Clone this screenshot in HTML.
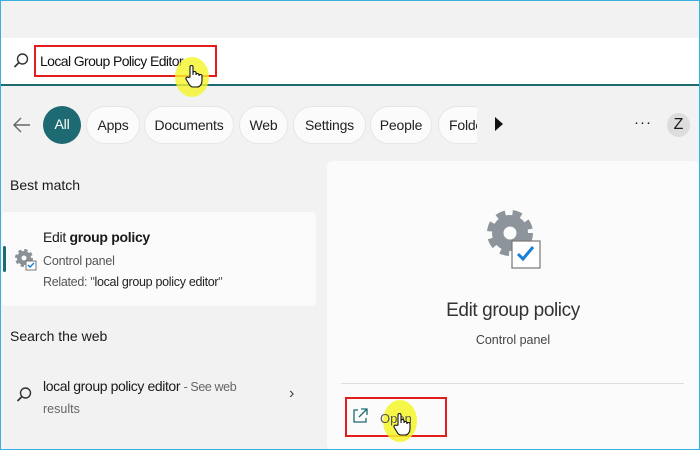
<!DOCTYPE html>
<html><head><style>
*{margin:0;padding:0;box-sizing:border-box}
body{width:700px;height:450px;overflow:hidden;background:#f2f2f2;font-family:"Liberation Sans",sans-serif;position:relative;color:#1a1a1a}
.frame{position:absolute;inset:0;border:1px solid #38b0e0;pointer-events:none;z-index:10}
.abs{position:absolute}
.pill{position:absolute;top:106px;height:38px;border-radius:19px;background:#fbfbfb;border:1px solid #e6e6e6;font-size:14px;line-height:36px;text-align:center;color:#222;letter-spacing:-0.2px}
</style></head><body>
<div class="frame"></div>
<div class="abs" style="left:1px;top:38px;width:698px;height:48px;background:#fff;border-bottom:2px solid #1e6a72"></div>
<svg class="abs" style="left:12px;top:52px" width="18" height="18" viewBox="0 0 18 18"><circle cx="10.5" cy="7" r="5" fill="none" stroke="#333" stroke-width="1.4"/><path d="M7 10.5L2.5 15" stroke="#333" stroke-width="1.6"/></svg>
<div class="abs" style="left:34px;top:45px;width:183px;height:32px;border:2px solid #e31c1c"></div>
<div class="abs" style="left:40px;top:53px;font-size:14px;color:#111;letter-spacing:-0.6px">Local Group Policy Editor</div>
<div class="abs" style="left:175px;top:57px;width:34px;height:40px;border-radius:50%;background:rgba(245,245,40,0.8)"></div>
<svg class="abs" style="left:185px;top:64px" width="18" height="24" viewBox="0 0 18 24"><path d="M5 13V3a1.5 1.5 0 013 0v8V9a1.5 1.5 0 013 0v2a1.5 1.5 0 013 0v1a1.5 1.5 0 013 0v5c0 3-2 6-5 6H8c-2 0-3-1-4-3l-3-5a1.5 1.5 0 012.5-1.5z" fill="#fff" stroke="#111" stroke-width="1.1"/></svg>
<svg class="abs" style="left:12px;top:116px" width="20" height="18" viewBox="0 0 20 18"><path d="M18 9H3M9 2L2 9l7 7" fill="none" stroke="#666" stroke-width="1.4"/></svg>
<div class="pill" style="left:43px;width:38px;background:#1e6a72;color:#fff;border:none">All</div>
<div class="pill" style="left:86px;width:54px">Apps</div>
<div class="pill" style="left:144px;width:90px">Documents</div>
<div class="pill" style="left:239px;width:49px">Web</div>
<div class="pill" style="left:293px;width:73px">Settings</div>
<div class="pill" style="left:370px;width:62px">People</div>
<div class="pill" style="left:438px;width:60px;text-align:left;padding-left:10px;overflow:hidden">Folders</div>
<div class="abs" style="left:477px;top:104px;width:30px;height:42px;background:#f2f2f2"></div>
<svg class="abs" style="left:494px;top:117px" width="10" height="14"><path d="M1 0L9 7L1 14Z" fill="#111"/></svg>
<div class="abs" style="left:634px;top:114px;font-size:15px;letter-spacing:1px">···</div>
<div class="abs" style="left:667px;top:113px;width:23px;height:24px;border-radius:50%;background:#ddd;font-size:16px;text-align:center;line-height:24px">Z</div>
<div class="abs" style="left:10px;top:177px;font-size:14px">Best match</div>
<div class="abs" style="left:2px;top:212px;width:314px;height:94px;background:#fbfbfb;border-radius:4px"></div>
<div class="abs" style="left:3px;top:246px;width:3px;height:26px;background:#1e6a72;border-radius:2px"></div>
<svg class="abs" style="left:14px;top:248px" width="24" height="24" viewBox="0 0 24 24"><circle cx="10" cy="10" r="7" fill="#8a9097" stroke="#8a9097" stroke-width="4" stroke-dasharray="3 2.5"/><circle cx="10" cy="10" r="2.5" fill="#fbfbfb"/><rect x="12" y="13" width="10" height="9" fill="#fff" stroke="#777"/><path d="M14 17l2 2 4-4" stroke="#1a7fd6" fill="none" stroke-width="1.5"/></svg>
<div class="abs" style="left:43px;top:229px;font-size:14px;letter-spacing:-0.3px">Edit <span style="font-weight:600">group policy</span></div>
<div class="abs" style="left:43px;top:254px;font-size:12.5px;color:#555;letter-spacing:-0.2px">Control panel</div>
<div class="abs" style="left:43px;top:275px;font-size:12.5px;color:#555;letter-spacing:-0.3px">Related: "<span style="color:#222">local group policy editor</span>"</div>
<div class="abs" style="left:10px;top:328px;font-size:14px">Search the web</div>
<svg class="abs" style="left:15px;top:386px" width="18" height="18" viewBox="0 0 18 18"><circle cx="10.5" cy="7" r="5" fill="none" stroke="#333" stroke-width="1.4"/><path d="M7 10.5L2.5 15" stroke="#333" stroke-width="1.6"/></svg>
<div class="abs" style="left:43px;top:378px;font-size:14px;letter-spacing:-0.4px">local group policy editor <span style="font-size:12.5px;color:#666">- See web</span></div>
<div class="abs" style="left:43px;top:402px;font-size:12.5px;color:#666">results</div>
<div class="abs" style="left:289px;top:385px;font-size:16px;color:#444">›</div>
<div class="abs" style="left:327px;top:161px;width:372px;height:289px;background:#fbfbfb;border-radius:6px"></div>
<svg class="abs" style="left:482px;top:203px" width="64" height="72" viewBox="0 0 64 72"><circle cx="28" cy="30" r="18" fill="#8e949b" stroke="#8e949b" stroke-width="10" stroke-dasharray="8 6.5"/><circle cx="28" cy="30" r="6.5" fill="#fbfbfb"/><rect x="30" y="38" width="28" height="27" fill="#fff" stroke="#777" stroke-width="1.2"/><path d="M36 51l5 5 10-12" stroke="#1a7fd6" fill="none" stroke-width="3"/></svg>
<div class="abs" style="left:328px;top:300px;width:370px;text-align:center;font-size:19px;color:#333;letter-spacing:-0.4px">Edit group policy</div>
<div class="abs" style="left:328px;top:333px;width:370px;text-align:center;font-size:12.5px;color:#444">Control panel</div>
<div class="abs" style="left:341px;top:383px;width:343px;height:1px;background:#ddd"></div>
<div class="abs" style="left:345px;top:397px;width:102px;height:40px;border:2px solid #e31c1c"></div>
<svg class="abs" style="left:352px;top:408px" width="16" height="16" viewBox="0 0 16 16"><path d="M6 2H2v12h12v-4M9 1h6v6M15 1L7 9" fill="none" stroke="#1e6a72" stroke-width="1.3"/></svg>
<div class="abs" style="left:383px;top:400px;width:34px;height:42px;border-radius:50%;background:rgba(245,245,40,0.85)"></div>
<div class="abs" style="left:380px;top:411px;font-size:13px;color:#555">Open</div>
<svg class="abs" style="left:393px;top:412px" width="18" height="24" viewBox="0 0 18 24"><path d="M5 13V3a1.5 1.5 0 013 0v8V9a1.5 1.5 0 013 0v2a1.5 1.5 0 013 0v1a1.5 1.5 0 013 0v5c0 3-2 6-5 6H8c-2 0-3-1-4-3l-3-5a1.5 1.5 0 012.5-1.5z" fill="#fff" stroke="#111" stroke-width="1.1"/></svg>
</body></html>
